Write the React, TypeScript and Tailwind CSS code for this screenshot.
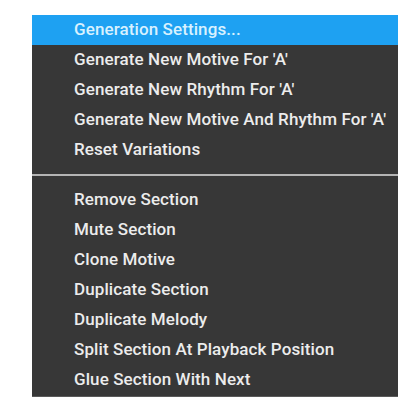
const groupA = [
  "Generation Settings...",
  "Generate New Motive For 'A'",
  "Generate New Rhythm For 'A'",
  "Generate New Motive And Rhythm For 'A'",
  "Reset Variations",
];

const groupB = [
  "Remove Section",
  "Mute Section",
  "Clone Motive",
  "Duplicate Section",
  "Duplicate Melody",
  "Split Section At Playback Position",
  "Glue Section With Next",
];

function Item({ label, active }: { label: string; active?: boolean }) {
  return (
    <div
      className={
        "h-[30px] flex items-center pl-[42px] text-[17px] font-medium tracking-[0.1px] whitespace-nowrap " +
        (active ? "bg-[#1ea1f2] text-[#d8f1ff]" : "text-[#ececec]")
      }
    >
      {label}
    </div>
  );
}

export default function App() {
  return (
    <div className="w-[419px] h-[409px] bg-white pt-[15px] pl-[32px]" style={{ fontFamily: "Roboto, 'Noto Sans', sans-serif" }}>
      <div className="w-[366px] bg-[#373737] border-b border-[#5a5a5a]">
        {groupA.map((l, i) => (
          <Item key={l} label={l} active={i === 0} />
        ))}
        <div className="h-[20px] flex items-center">
          <div className="w-full h-[2px] bg-[#b4b4b4]" />
        </div>
        {groupB.map((l) => (
          <Item key={l} label={l} />
        ))}
        <div className="h-[1px]" />
      </div>
    </div>
  );
}
